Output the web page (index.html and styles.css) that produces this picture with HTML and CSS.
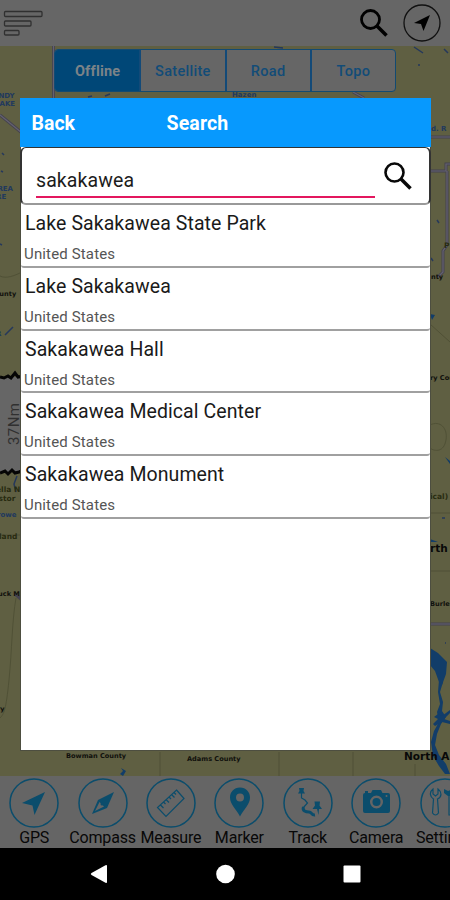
FILE: index.html
```html
<!DOCTYPE html>
<html lang="en">
<head>
<meta charset="utf-8">
<title>Map search</title>
<link rel="stylesheet" href="styles.css">
</head>
<body>
<div class="screen">
  <header class="topbar">
    <svg class="menu" width="42" height="28" viewBox="0 0 42 28"><rect x="1.500" y="1.500" width="37.500" height="5" rx="1"/><rect x="1.500" y="11" width="26.500" height="5" rx="1"/><rect x="1.500" y="20.500" width="14.500" height="4.500" rx="1"/></svg>
    <svg class="find" width="30" height="30" viewBox="0 0 30 30"><circle cx="11.500" cy="11.500" r="9"/><path d="M18 18L27.500 27.500" /></svg>
    <svg class="locate" width="38" height="38" viewBox="0 0 38 38"><circle cx="19" cy="19" r="18"/><path d="M27 11L11 19L18 20L20.500 27Z"/></svg>
  </header>

  <main class="map">
    <svg class="terrain" width="450" height="730" viewBox="0 46 450 730">
      <rect class="land" y="46" width="450" height="730"/>
      <rect class="scale" y="377" width="24" height="95"/>
      <g class="border">
        <path d="M0 276C6 279 14 276 22 272M0 535H22M16 598C12 620 12 650 9 680S4 714 0 718M160 752V776M279 752V776M353 752V776M415 764V776M430 425C440 420 448 428 446 440S435 452 430 448M430 513H450M430 571H450M430 324L450 342"/>
      </g>
      <g class="road"><path d="M53.500 46V98M0 115L22 133M430 137H450M430 171H446V164H450M447 171V245L443 251V272L438 277M430 624H450M353 92L364 98M15 594L22 600"/></g>
      <g class="road-core"><path d="M53.500 46V98M0 115L22 133M430 137H450M430 171H446V164H450M447 171V245L443 251V272L438 277M430 624H450M353 92L364 98"/></g>
      <g class="water">
        <path d="M430 648L438 653L447 662L446 674L442 685L439 682L435 671L430 665Z"/>
        <path d="M439 680L443 682L440 692L443 702L442 711L446 717L441 724L437 734L435 745L439 755L446 764L450 774H445L439 766L433 756L431 742L434 731L439 722L437 712L440 704L438 692Z"/>
        <path d="M434 717L438 714L442 716L450 710V713L444 719L450 721V724L442 722L435 726L433 724L438 719ZM121 768L126 771L123 776L120 774L123 771ZM430 539L438 542L431 542ZM445 457L450 461V464ZM430 314L435 315L432 320Z"/>
        <path class="stream" d="M5 335L13 327M17 476L14 484L16 492M414 47L423 53M444 49L448 53M437 220L439 223M431 258L433 261M2 153L4 155M1 171L3 172M105 96L110 94M88 97L92 96M274 47L283 48M442 518H445M418 65H420M445 643H446M0 244L2 245"/>
      </g>
      <g class="town"><text x="-7" y="98">ANDY</text><text x="-5" y="106">LAKE</text><text x="-8" y="191">AREA</text><text x="-4" y="199">RE</text><text x="-4" y="336">R</text><text x="-3" y="517">rowe</text><text x="232" y="97">Hazen</text><text x="431" y="131">d. R</text></g>
      <g class="county"><text x="-10" y="296">County</text><text x="-7" y="596">Buck M</text><text x="-3" y="711">ry</text><text x="66" y="758">Bowman County</text><text x="187" y="761">Adams County</text><text x="431" y="279">nty</text><text x="430" y="380">ry County</text><text x="430" y="606">Burleigh</text></g>
      <g class="park"><text x="-4" y="492">ella N</text><text x="-4" y="501">istor</text><text x="-1" y="539">land</text><text x="430" y="499">ical)</text><text x="444" y="248">P</text></g>
      <g class="region"><text x="404" y="760">North A</text><text x="430" y="552">rth</text></g>
      <path class="jag" d="M0 377L4 378L8 376L11 378L15 373L18 377L24 376M0 473L5 471L8 474L12 470L15 473L19 472L24 470"/>
      <text class="distance" transform="translate(18.500 445) rotate(-90)">37Nm</text>
    </svg>
    <nav class="tabs"><span class="tab on">Offline</span><span class="tab">Satellite</span><span class="tab">Road</span><span class="tab">Topo</span></nav>
  </main>

  <footer class="tools">
    <div class="tool"><svg viewBox="0 0 50 50"><circle class="ring" cx="25" cy="25" r="24"/><path d="M36 14L13 25L23.500 27.500L25.500 37Z"/></svg><span>GPS</span></div>
    <div class="tool"><svg viewBox="0 0 50 50"><circle class="ring" cx="25" cy="25" r="24"/><path fill-rule="evenodd" d="M36 14L29 30L14 36L20 22ZM21.500 24L17 33L26 28.500Z"/><circle cx="24" cy="26" r="1.500"/></svg><span>Compass</span></div>
    <div class="tool"><svg viewBox="0 0 50 50"><circle class="ring" cx="25" cy="25" r="24"/><path class="line" d="M30.500 12L38 20.500L20 38.500L11.500 29.500ZM14.500 27L17.500 30M17.500 24L19.500 26M20 21.500L23 24.500M23 19L25 21M25.500 16.500L28.500 19.500M28 14.500L30 16.500"/></svg><span>Measure</span></div>
    <div class="tool"><svg viewBox="0 0 50 50"><circle class="ring" cx="25" cy="25" r="24"/><path fill-rule="evenodd" d="M26 9.500C20 9.500 16 14 16 19.500C16 26 22 31 26 38.500C30 31 36 26 36 19.500C36 14 32 9.500 26 9.500ZM26 15.500A4 4 0 1 1 26 23.500A4 4 0 1 1 26 15.500Z"/></svg><span>Marker</span></div>
    <div class="tool"><svg viewBox="0 0 50 50"><circle class="ring" cx="25" cy="25" r="24"/><path d="M16 10H21L20.500 13L22 15.500H15L16.500 13ZM31.500 23.500H37L36.500 27.500L39 31H36L35.500 37L34 31H29.500L32 27.500Z"/><path class="line" d="M18.500 15V20L22 22L24.500 25L20 30"/><path class="track" d="M20.500 29C19 33 23 34 26 34S28 37.500 32 37"/></svg><span>Track</span></div>
    <div class="tool"><svg viewBox="0 0 50 50"><circle class="ring" cx="25" cy="25" r="24"/><path fill-rule="evenodd" d="M14 15V13H17V15H20L21.500 12H30L31.500 15H37Q39 15 39 17V33Q39 35 37 35H14Q12 35 12 33V17Q12 15 14 15ZM25.500 17.500A6.500 6.500 0 1 1 25.500 30.500A6.500 6.500 0 1 1 25.500 17.500ZM35.500 17A1 1 0 1 1 35.500 19A1 1 0 1 1 35.500 17Z"/><circle class="lens" cx="25.500" cy="24" r="4"/></svg><span>Camera</span></div>
    <div class="tool"><svg viewBox="0 0 50 50"><circle class="ring" cx="25" cy="25" r="24"/><path class="line" d="M13 11C9 14 10 19 13.500 21L12.500 35Q15.500 39 18.500 35L17.500 21C22 19 22 14 18 11V16L15.500 18L13 16ZM29 18V37H34V18"/><path d="M24 11L28 13L34 11V18H28L24 15Z"/></svg><span>Settings</span></div>
  </footer>

  <div class="system"><svg width="270" height="20" viewBox="0 0 270 20"><path d="M17 2V18Q17 19.500 15.500 18.700L1.500 11Q0 10 1.500 9L15.500 1.300Q17 .5 17 2Z"/><circle cx="135.500" cy="10" r="9.300"/><rect x="253.500" y="1.500" width="17" height="17" rx="1"/></svg></div>

  <section class="dialog">
    <div class="title"><span class="back">Back</span><span class="heading">Search</span></div>
    <div class="query"><div class="field">sakakawea</div><svg class="go" width="30" height="30" viewBox="0 0 30 30"><circle cx="11.500" cy="11.500" r="9"/><path d="M18 18L27.500 27.500"/></svg></div>
    <div class="result"><div class="name">Lake Sakakawea State Park</div><div class="country">United States</div></div>
    <div class="result"><div class="name">Lake Sakakawea</div><div class="country">United States</div></div>
    <div class="result"><div class="name">Sakakawea Hall</div><div class="country">United States</div></div>
    <div class="result"><div class="name">Sakakawea Medical Center</div><div class="country">United States</div></div>
    <div class="result"><div class="name">Sakakawea Monument</div><div class="country">United States</div></div>
  </section>
</div>
</body>
</html>
```
FILE: styles.css
```css
* { box-sizing: border-box; }
body { margin: 0; background: #000; font-family: Roboto, "Liberation Sans", sans-serif; }
.screen { position: relative; width: 450px; height: 900px; overflow: hidden; display: flex; flex-direction: column; }

.topbar { height: 46px; flex: none; background: #666; display: flex; align-items: flex-start; padding: 4px 9px 0 3px; }
.menu { margin-top: 6px; fill: none; stroke: #303030; stroke-width: 1.3; }
.find { margin: 4px 0 0 auto; fill: none; stroke: #000; stroke-width: 2.8; }
.find path, .go path { stroke-width: 3.6; }
.locate { margin-left: 14.5px; }
.locate circle { fill: none; stroke: #111; stroke-width: 1.3; }

.map { position: relative; height: 730px; flex: none; }
.terrain { display: block; }
.land { fill: #5f5f42; }
.scale { fill: #666; }
.border path { fill: none; stroke: #505136; stroke-width: 1; }
.road path { fill: none; stroke: #454350; stroke-width: 3; }
.road-core path { fill: none; stroke: #656270; stroke-width: 1.2; }
.water path { fill: #123d69; }
.water .stream { fill: none; stroke: #25385c; stroke-width: 1.5; }
.town { font: bold 7px "DejaVu Sans", sans-serif; fill: #21395e; }
.county { font: bold 6.6px "DejaVu Sans", sans-serif; fill: #10100c; }
.park { font: bold 7.5px "DejaVu Sans", sans-serif; fill: #282b10; }
.region { font: bold 10.5px "DejaVu Sans", sans-serif; fill: #080808; }
.jag { fill: none; stroke: #050505; stroke-width: 3; }
.distance { font-size: 15px; fill: #303030; letter-spacing: .4px; }

.tabs { position: absolute; left: 54px; top: 3px; width: 342px; height: 43px; display: flex; border: 1px solid #134a72; border-radius: 4px; background: #666; overflow: hidden; }
.tab { flex: 1; display: flex; align-items: center; justify-content: center; padding: 2px 0 0; border-left: 2px solid #134a78; color: #124c78; font-size: 14.5px; font-weight: 500; letter-spacing: .3px; }
.tab.on { background: #004777; color: #7b8388; border-left: 0; padding-left: 1px; font-weight: 700; letter-spacing: .2px; }

.tools { height: 72px; flex: none; background: #656565; display: flex; padding-top: 2px; overflow: hidden; }
.tool { width: 68.4px; flex: none; display: flex; flex-direction: column; align-items: center; }
.tool svg { width: 50px; height: 50px; flex: none; fill: #0b4d6c; }
.tool .ring { fill: none; stroke: #0b4d6c; stroke-width: 1.5; }
.tool .line { fill: none; stroke: #0b4d6c; stroke-width: 1.2; }
.tool .track { fill: none; stroke: #0b4d6c; stroke-width: 3; }
.tool span { padding-top: 1px; font-size: 16px; line-height: 18px; color: #080808; white-space: nowrap; letter-spacing: -.15px; }

.system { height: 52px; flex: none; background: #000; display: flex; justify-content: center; align-items: center; }
.system svg { fill: #fff; overflow: visible; }

.dialog { position: absolute; left: 20px; top: 98px; width: 411px; height: 653px; background: #fff; border: 1px solid #4d4e40; border-top: 0; }
.title { height: 49px; margin: 0 -1px; padding: 2px 12px 0 11.5px; background: #0799fe; color: #fff; display: flex; align-items: center; font-size: 19.5px; font-weight: 700; }
.back { width: 135px; }
.heading { letter-spacing: .15px; }
.query { height: 58px; margin: 0 -1px; border: 1px solid #333; border-width: 1px 2px 2px; border-bottom-color: #999; border-radius: 6px; display: flex; align-items: flex-start; padding: 14px 15px 0 14px; }
.field { width: 339px; height: 36px; border-bottom: 2px solid #e3175e; padding-top: 7px; font-size: 19.5px; line-height: 24px; color: #1c1c1c; letter-spacing: .1px; }
.go { margin: -1px 0 0 8px; fill: none; stroke: #080808; stroke-width: 2.6; flex: none; }
.result { height: 62.8px; border-bottom: 2px solid #a0a0a0; border-radius: 3px; padding: 7px 0 0 4px; }
.name { font-size: 19.5px; line-height: 24px; color: #1a1a1a; letter-spacing: .08px; }
.country { margin: 9px 0 0 -1px; font-size: 15px; line-height: 18px; color: #555; letter-spacing: .15px; }
```
